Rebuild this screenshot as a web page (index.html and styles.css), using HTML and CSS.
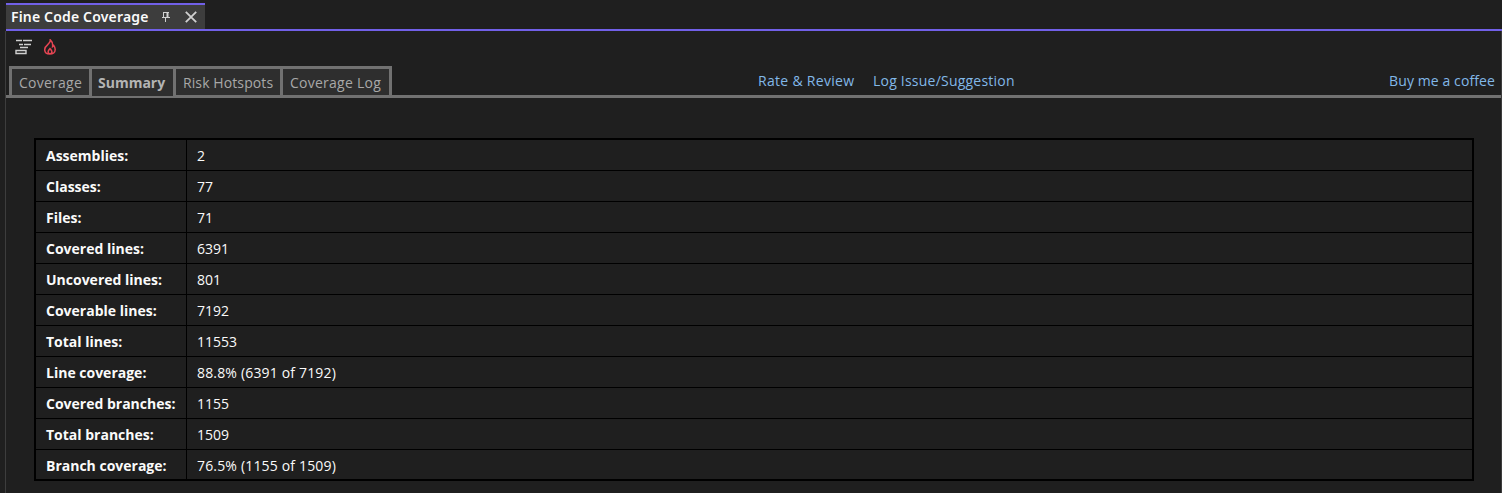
FILE: index.html
```html
<!DOCTYPE html>
<html lang="en">
<head>
<meta charset="utf-8">
<title>Fine Code Coverage</title>
<link rel="stylesheet" href="styles.css">
</head>
<body>
<header class="window-tabs">
  <div class="window-tab">
    <span class="window-title">Fine Code Coverage</span>
    <svg class="pin" width="10" height="12" viewBox="0 0 10 12"><path d="M2 1.500h6M2.500 1.500v5M1 6.500h8M4.500 7v4" /><path class="pin-side" d="M6.500 1v5" /></svg>
    <svg class="close" width="12" height="12" viewBox="0 0 12 12"><path d="M.8.8l10.400 10.400M11.200.8L.8 11.200" /></svg>
  </div>
</header>
<main class="panel">
  <div class="toolbar">
    <svg width="18" height="16" viewBox="0 0 18 16"><path class="lines" d="M1 1.500h6M8 1.500h9M4 5.500h4M9 5.500h7M5 8.500h8M1 11.500h10v3H1z" /></svg>
    <svg width="12" height="16" viewBox="0 0 12 16"><path class="flame" d="M6.300.9C6.600 3.300 4.600 4.400 3.300 6.200 1.500 7.600.7 9 .7 10.700c0 2.500 2 4.400 5.100 4.400s5.400-1.900 5.400-4.600c0-1.500-.6-2.800-1.500-4L8.600 7.600C8.900 4.600 8.200 2.500 6.300.9zM6 9.600c-1.200 1.100-1.900 2-1.900 3.200 0 1.200.7 2 1.900 2s1.900-.8 1.900-2C7.900 11.600 7.200 10.700 6 9.600z" /></svg>
  </div>
  <div class="tab-row">
    <nav class="tabs">
      <a class="tab t1"><span>Coverage</span></a>
      <a class="tab t2 active"><span>Summary</span></a>
      <a class="tab t3"><span>Risk Hotspots</span></a>
      <a class="tab t4"><span>Coverage Log</span></a>
    </nav>
    <div class="links">
      <a class="rate">Rate &amp; Review</a>
      <a class="issue">Log Issue/Suggestion</a>
      <a class="coffee">Buy me a coffee</a>
    </div>
  </div>
  <table class="summary">
    <tr><th>Assemblies:</th><td>2</td></tr>
    <tr><th>Classes:</th><td>77</td></tr>
    <tr><th>Files:</th><td>71</td></tr>
    <tr><th>Covered lines:</th><td>6391</td></tr>
    <tr><th>Uncovered lines:</th><td>801</td></tr>
    <tr><th>Coverable lines:</th><td>7192</td></tr>
    <tr><th>Total lines:</th><td>11553</td></tr>
    <tr><th>Line coverage:</th><td class="ratio">88.8% (6391 of 7192)</td></tr>
    <tr><th>Covered branches:</th><td>1155</td></tr>
    <tr><th>Total branches:</th><td>1509</td></tr>
    <tr><th>Branch coverage:</th><td class="ratio">76.5% (1155 of 1509)</td></tr>
  </table>
</main>
</body>
</html>
```
FILE: styles.css
```css
* { box-sizing: border-box; }
html, body { margin: 0; height: 100%; overflow: hidden; }
body {
  display: flex;
  flex-direction: column;
  background: #1f1f1f;
  color: #fafafa;
  font: 14px/20px "Open Sans", "Noto Sans", sans-serif;
  white-space: nowrap;
}
svg { display: block; fill: none; flex: none; }
.window-tabs {
  height: 31px;
  margin-left: 6px;
  padding-top: 3px;
  border-bottom: 2px solid #7160e8;
}
.window-tab {
  display: flex;
  align-items: center;
  width: 199px;
  height: 26px;
  padding-left: 5px;
  border-top: 2px solid #7160e8;
  background: #3d3d3d;
}
.window-title {
  width: 150px;
  font: 600 14px/20px "Noto Sans", "Open Sans", sans-serif;
  letter-spacing: 0.17px;
}
.pin { stroke: #d0d0d0; stroke-width: 1; margin-right: 14px; }
.pin-side { stroke-width: 2; }
.close { stroke: #d0d0d0; stroke-width: 1.800; }
.panel {
  flex: 1;
  margin-left: 5px;
  border-left: 1px solid #3d3d3d;
  border-right: 1px solid #3d3d3d;
}
.toolbar {
  display: flex;
  gap: 12px;
  height: 35px;
  padding: 8px 0 0 9px;
}
.toolbar svg + svg { margin-left: -1px; }
.lines { stroke: #d0d0d0; stroke-width: 1.400; }
.flame { stroke: #e64553; stroke-width: 1.500; }
.tab-row {
  display: flex;
  height: 32px;
  padding-left: 3px;
  border-bottom: 3px solid #717171;
}
.tabs {
  display: flex;
  height: 29px;
  border: 3px solid #717171;
  border-bottom: 0;
}
.tab {
  height: 26px;
  padding: 4px 0 0 7px;
  border-right: 3px solid #717171;
  background: #2e2e2e;
  color: #a8a8a8;
}
.tab:last-child { border-right: 0; }
.tab.active { height: 27px; padding-left: 6px; font-weight: 700; color: #b4b4b4; }
.t1 { width: 80px; letter-spacing: 0.25px; }
.t2 { width: 84px; }
.t3 { width: 107px; letter-spacing: 0.1px; }
.t4 { width: 106px; letter-spacing: 0.25px; }
.links {
  display: flex;
  flex: 1;
  padding: 5px 6px 0 366px;
  color: #82b8e8;
}
.rate { width: 115px; letter-spacing: 0.3px; }
.issue { letter-spacing: 0.22px; }
.coffee { margin-left: auto; letter-spacing: 0.1px; }
.summary {
  width: 1440px;
  margin: 40px 0 0 28px;
  border: 2px solid #000;
  border-spacing: 0;
  table-layout: fixed;
}
.summary th, .summary td {
  height: 31px;
  padding: 2px 0 0 10px;
  border-bottom: 1px solid #000;
  text-align: left;
}
.summary th { width: 151px; border-right: 1px solid #000; font-weight: 700; }
.summary .ratio { letter-spacing: 0.17px; }
.summary tr:last-child > * { height: 29px; border-bottom: 0; }
```
